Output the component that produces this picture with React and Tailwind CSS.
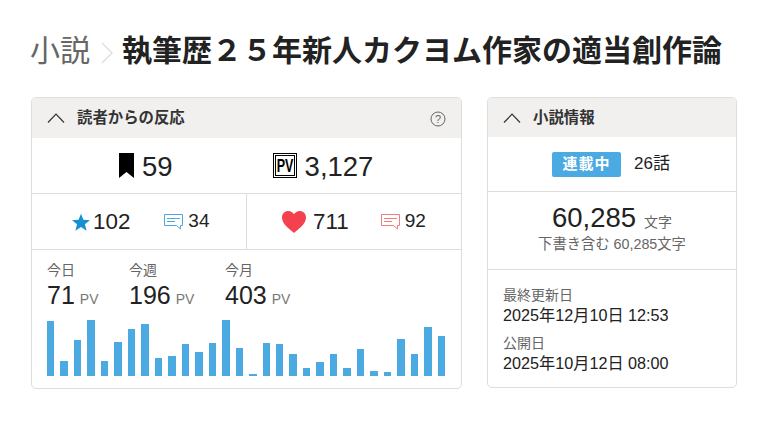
const FONT = "font-['Liberation_Sans','Noto_Sans_CJK_JP',sans-serif]";
const bars = [55,15,36,56,15,34,47,52,18,20,32,24,33,56,28,2,33,32,22,8,14,22,8,27,5,4,37,22,49,40];

function Chevron() {
  return (
    <svg width="18" height="10" viewBox="0 0 18 10" fill="none" stroke="#333" strokeWidth="1.2">
      <path d="M1 9.5 L9 1.2 L17 9.5" />
    </svg>
  );
}

function Comment({ color }) {
  return (
    <svg width="19" height="16" viewBox="0 0 19 16" fill="none" stroke={color} strokeWidth="1">
      <path d="M0.5 0.5 H18.5 V11.5 H16.5 V15 L12.5 11.5 H0.5 Z" />
      <path d="M3 4.5 H16 M3 7.5 H11" />
    </svg>
  );
}

function Stat({ label, value, cls }) {
  return (
    <div className={cls}>
      <div className="text-[14px] leading-[18px] text-[#666]">{label}</div>
      <div className="flex items-baseline gap-[5px] leading-[30px] mt-[1px]">
        <span className="text-[25px] text-[#222]">{value}</span>
        <span className="text-[14px] text-[#777]">PV</span>
      </div>
    </div>
  );
}

export default function App() {
  return (
    <div className={`${FONT} w-[758px] h-[427px] bg-white pl-[31px] pr-[21px] pt-[33px] text-[#222] overflow-hidden`}>
      <div className="flex items-center h-[36px]">
        <span className="text-[30px] text-[#666] leading-[36px] -ml-[1px]">小説</span>
        <svg className="ml-[11px] mr-[9px] mt-[4px]" width="12" height="22" viewBox="0 0 12 22" fill="none" stroke="#ddd" strokeWidth="1.4">
          <path d="M1 1 L11 11 L1 21" />
        </svg>
        <h1 className="text-[30px] font-bold leading-[36px] whitespace-nowrap">執筆歴２５年新人カクヨム作家の適当創作論</h1>
      </div>
      <div className="flex gap-[25px] mt-[28px]">
        <section className="w-[431px] shrink-0 h-[292px] border border-[#ddd] rounded-[5px] overflow-hidden flex flex-col">
          <header className="h-[40px] bg-[#f1f0ef] flex items-center pl-[15px] pr-[15px] shrink-0">
            <Chevron />
            <span className="ml-[12px] text-[15.4px] font-bold text-[#333]">読者からの反応</span>
            <svg className="ml-auto mt-[2px]" width="16" height="16" viewBox="0 0 16 16" fill="none">
              <circle cx="8" cy="8" r="7" stroke="#666" />
              <text x="8" y="12" textAnchor="middle" fontSize="11" fill="#666">?</text>
            </svg>
          </header>
          <div className="h-[56px] border-b border-[#ddd] flex items-center shrink-0 pl-[87px]">
            <svg width="15" height="25" viewBox="0 0 15 25" fill="#000"><path d="M0 0 H15 V25 L7.5 19 L0 25 Z" /></svg>
            <span className="ml-[8px] text-[27.5px] mt-[3px]">59</span>
            <svg className="ml-[100px]" width="24" height="25" viewBox="0 0 24 25" fill="none">
              <rect x="0.5" y="0.5" width="23" height="24" stroke="#000" />
              <rect x="2.5" y="2.5" width="19" height="20" stroke="#000" />
              <text transform="translate(12 19) scale(1 1.4)" textAnchor="middle" fontSize="12.5" fontWeight="700" fill="#000">PV</text>
            </svg>
            <span className="ml-[8px] text-[27.5px] mt-[3px]">3,127</span>
          </div>
          <div className="h-[56px] border-b border-[#ddd] flex shrink-0">
            <div className="w-[215px] border-r border-[#ddd] flex items-center pl-[40px]">
              <svg width="18" height="18" viewBox="0 0 24 24" fill="#1591d0"><path d="M12 1 L15.2 9 L24 9.5 L17.2 15 L19.5 23.5 L12 18.8 L4.5 23.5 L6.8 15 L0 9.5 L8.8 9 Z" /></svg>
              <span className="ml-[3px] text-[22.4px]">102</span>
              <span className="ml-[34px] flex"><Comment color="#4ea8df" /></span>
              <span className="ml-[5px] text-[19px] -mt-[1px]">34</span>
            </div>
            <div className="flex-1 flex items-center pl-[35px]">
              <svg width="24" height="22" viewBox="0 0 24 22" fill="#f4414e"><path d="M12 22 C8 18 0 13.5 0 6.5 C0 2.5 3 0 6.3 0 C8.8 0 10.8 1.3 12 3.2 C13.2 1.3 15.2 0 17.7 0 C21 0 24 2.5 24 6.5 C24 13.5 16 18 12 22 Z" /></svg>
              <span className="ml-[7px] text-[22.4px]">711</span>
              <span className="ml-[32px] flex"><Comment color="#f87a7a" /></span>
              <span className="ml-[5px] text-[19px] -mt-[1px]">92</span>
            </div>
          </div>
          <div className="flex-1 px-[15px] pt-[11px] flex flex-col">
            <div className="flex">
              <Stat label="今日" value="71" cls="w-[82px]" />
              <Stat label="今週" value="196" cls="w-[96px]" />
              <Stat label="今月" value="403" cls="" />
            </div>
            <div className="flex gap-[6px] items-end h-[56px] mt-[6px] w-[398px]">
              {bars.map((h, i) => (
                <div key={i} className="flex-1 bg-[#4caae2]" style={{ height: h }} />
              ))}
            </div>
          </div>
        </section>
        <section className="w-[250px] shrink-0 h-[291px] border border-[#ddd] rounded-[5px] overflow-hidden flex flex-col">
          <header className="h-[39px] bg-[#f1f0ef] flex items-center pl-[15px] shrink-0">
            <Chevron />
            <span className="ml-[12px] text-[15.4px] font-bold text-[#333]">小説情報</span>
          </header>
          <div className="h-[55px] border-b border-[#ddd] flex items-center justify-center gap-[13px] pr-[2px] shrink-0">
            <span className="w-[69px] h-[25px] rounded-[2px] bg-[#4caae2] text-white text-[15px] font-bold tracking-[1px] flex items-center justify-center">連載中</span>
            <span className="text-[17px]">26話</span>
          </div>
          <div className="h-[78px] border-b border-[#ddd] flex flex-col items-center pt-[8px] shrink-0">
            <div className="flex items-baseline gap-[8px] leading-[36px]">
              <span className="text-[27.5px]">60,285</span>
              <span className="text-[14px] text-[#666]">文字</span>
            </div>
            <div className="text-[14.3px] leading-[17px] text-[#666] -mt-[4px]">下書き含む 60,285文字</div>
          </div>
          <div className="px-[15px] pt-[17px]">
            <div className="text-[14px] leading-[17px] text-[#666]">最終更新日</div>
            <div className="text-[16.2px] leading-[20px] mt-[1px]">2025年12月10日 12:53</div>
            <div className="text-[14px] leading-[17px] text-[#666] mt-[10px]">公開日</div>
            <div className="text-[16.2px] leading-[20px] mt-[1px]">2025年10月12日 08:00</div>
          </div>
        </section>
      </div>
    </div>
  );
}
